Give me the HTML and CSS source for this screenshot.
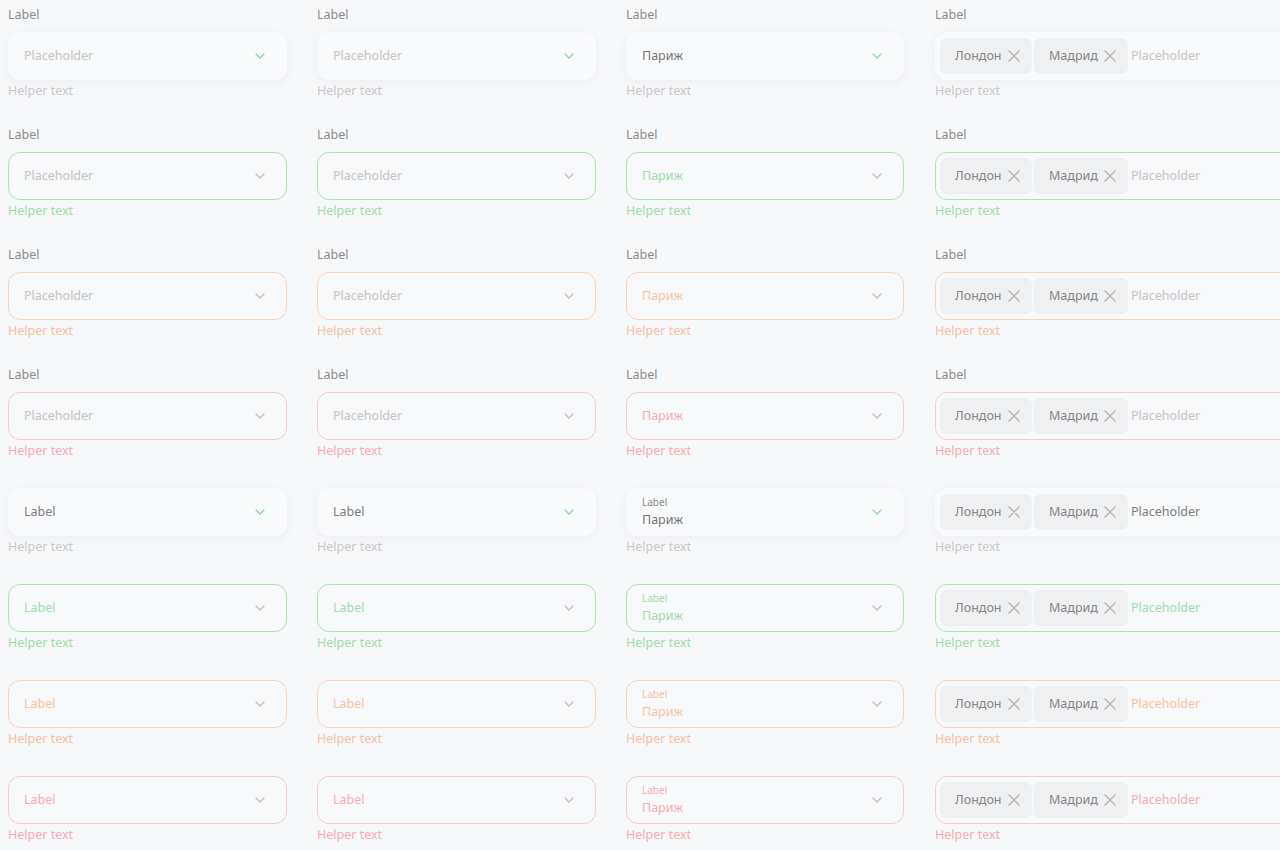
FILE: index.html
```html
<!DOCTYPE html>
<html lang="ru">
<head>
<meta charset="utf-8">
<title>Select fields</title>
<link rel="stylesheet" href="styles.css">
</head>
<body>
<main class="sheet">
  <section class="group group-labeled">
    <!-- Row 1: default -->
    <div class="field"><div class="label">Label</div><div class="box filled"><span class="ph">Placeholder</span><svg class="chev active" viewBox="0 0 10 6"><path d="M1 1l4 4 4-4"/></svg></div><div class="helper">Helper text</div></div>
    <div class="field"><div class="label">Label</div><div class="box filled"><span class="ph">Placeholder</span><svg class="chev active" viewBox="0 0 10 6"><path d="M1 1l4 4 4-4"/></svg></div><div class="helper">Helper text</div></div>
    <div class="field"><div class="label">Label</div><div class="box filled"><span class="val">Париж</span><svg class="chev active" viewBox="0 0 10 6"><path d="M1 1l4 4 4-4"/></svg></div><div class="helper">Helper text</div></div>
    <div class="field"><div class="label">Label</div><div class="box filled multi"><span class="chip">Лондон<svg class="x" viewBox="0 0 12 12"><path d="M1 1l10 10M11 1L1 11"/></svg></span><span class="chip">Мадрид<svg class="x" viewBox="0 0 12 12"><path d="M1 1l10 10M11 1L1 11"/></svg></span><span class="ph">Placeholder</span></div><div class="helper">Helper text</div></div>

    <!-- Row 2: success -->
    <div class="field success"><div class="label">Label</div><div class="box"><span class="ph">Placeholder</span><svg class="chev" viewBox="0 0 10 6"><path d="M1 1l4 4 4-4"/></svg></div><div class="helper">Helper text</div></div>
    <div class="field success"><div class="label">Label</div><div class="box"><span class="ph">Placeholder</span><svg class="chev" viewBox="0 0 10 6"><path d="M1 1l4 4 4-4"/></svg></div><div class="helper">Helper text</div></div>
    <div class="field success"><div class="label">Label</div><div class="box"><span class="val">Париж</span><svg class="chev" viewBox="0 0 10 6"><path d="M1 1l4 4 4-4"/></svg></div><div class="helper">Helper text</div></div>
    <div class="field success"><div class="label">Label</div><div class="box multi"><span class="chip">Лондон<svg class="x" viewBox="0 0 12 12"><path d="M1 1l10 10M11 1L1 11"/></svg></span><span class="chip">Мадрид<svg class="x" viewBox="0 0 12 12"><path d="M1 1l10 10M11 1L1 11"/></svg></span><span class="ph">Placeholder</span></div><div class="helper">Helper text</div></div>

    <!-- Row 3: warning -->
    <div class="field warning"><div class="label">Label</div><div class="box"><span class="ph">Placeholder</span><svg class="chev" viewBox="0 0 10 6"><path d="M1 1l4 4 4-4"/></svg></div><div class="helper">Helper text</div></div>
    <div class="field warning"><div class="label">Label</div><div class="box"><span class="ph">Placeholder</span><svg class="chev" viewBox="0 0 10 6"><path d="M1 1l4 4 4-4"/></svg></div><div class="helper">Helper text</div></div>
    <div class="field warning"><div class="label">Label</div><div class="box"><span class="val">Париж</span><svg class="chev" viewBox="0 0 10 6"><path d="M1 1l4 4 4-4"/></svg></div><div class="helper">Helper text</div></div>
    <div class="field warning"><div class="label">Label</div><div class="box multi"><span class="chip">Лондон<svg class="x" viewBox="0 0 12 12"><path d="M1 1l10 10M11 1L1 11"/></svg></span><span class="chip">Мадрид<svg class="x" viewBox="0 0 12 12"><path d="M1 1l10 10M11 1L1 11"/></svg></span><span class="ph">Placeholder</span></div><div class="helper">Helper text</div></div>

    <!-- Row 4: error -->
    <div class="field error"><div class="label">Label</div><div class="box"><span class="ph">Placeholder</span><svg class="chev" viewBox="0 0 10 6"><path d="M1 1l4 4 4-4"/></svg></div><div class="helper">Helper text</div></div>
    <div class="field error"><div class="label">Label</div><div class="box"><span class="ph">Placeholder</span><svg class="chev" viewBox="0 0 10 6"><path d="M1 1l4 4 4-4"/></svg></div><div class="helper">Helper text</div></div>
    <div class="field error"><div class="label">Label</div><div class="box"><span class="val">Париж</span><svg class="chev" viewBox="0 0 10 6"><path d="M1 1l4 4 4-4"/></svg></div><div class="helper">Helper text</div></div>
    <div class="field error"><div class="label">Label</div><div class="box multi"><span class="chip">Лондон<svg class="x" viewBox="0 0 12 12"><path d="M1 1l10 10M11 1L1 11"/></svg></span><span class="chip">Мадрид<svg class="x" viewBox="0 0 12 12"><path d="M1 1l10 10M11 1L1 11"/></svg></span><span class="ph">Placeholder</span></div><div class="helper">Helper text</div></div>
  </section>

  <section class="group group-floating">
    <!-- Row 5: default -->
    <div class="field"><div class="box filled"><span class="inlabel">Label</span><svg class="chev active" viewBox="0 0 10 6"><path d="M1 1l4 4 4-4"/></svg></div><div class="helper">Helper text</div></div>
    <div class="field"><div class="box filled"><span class="inlabel">Label</span><svg class="chev active" viewBox="0 0 10 6"><path d="M1 1l4 4 4-4"/></svg></div><div class="helper">Helper text</div></div>
    <div class="field"><div class="box filled"><span class="stack"><span class="mini">Label</span><span class="val">Париж</span></span><svg class="chev active" viewBox="0 0 10 6"><path d="M1 1l4 4 4-4"/></svg></div><div class="helper">Helper text</div></div>
    <div class="field"><div class="box filled multi"><span class="chip">Лондон<svg class="x" viewBox="0 0 12 12"><path d="M1 1l10 10M11 1L1 11"/></svg></span><span class="chip">Мадрид<svg class="x" viewBox="0 0 12 12"><path d="M1 1l10 10M11 1L1 11"/></svg></span><span class="inlabel">Placeholder</span></div><div class="helper">Helper text</div></div>

    <!-- Row 6: success -->
    <div class="field success"><div class="box"><span class="inlabel">Label</span><svg class="chev" viewBox="0 0 10 6"><path d="M1 1l4 4 4-4"/></svg></div><div class="helper">Helper text</div></div>
    <div class="field success"><div class="box"><span class="inlabel">Label</span><svg class="chev" viewBox="0 0 10 6"><path d="M1 1l4 4 4-4"/></svg></div><div class="helper">Helper text</div></div>
    <div class="field success"><div class="box"><span class="stack"><span class="mini">Label</span><span class="val">Париж</span></span><svg class="chev" viewBox="0 0 10 6"><path d="M1 1l4 4 4-4"/></svg></div><div class="helper">Helper text</div></div>
    <div class="field success"><div class="box multi"><span class="chip">Лондон<svg class="x" viewBox="0 0 12 12"><path d="M1 1l10 10M11 1L1 11"/></svg></span><span class="chip">Мадрид<svg class="x" viewBox="0 0 12 12"><path d="M1 1l10 10M11 1L1 11"/></svg></span><span class="inlabel">Placeholder</span></div><div class="helper">Helper text</div></div>

    <!-- Row 7: warning -->
    <div class="field warning"><div class="box"><span class="inlabel">Label</span><svg class="chev" viewBox="0 0 10 6"><path d="M1 1l4 4 4-4"/></svg></div><div class="helper">Helper text</div></div>
    <div class="field warning"><div class="box"><span class="inlabel">Label</span><svg class="chev" viewBox="0 0 10 6"><path d="M1 1l4 4 4-4"/></svg></div><div class="helper">Helper text</div></div>
    <div class="field warning"><div class="box"><span class="stack"><span class="mini">Label</span><span class="val">Париж</span></span><svg class="chev" viewBox="0 0 10 6"><path d="M1 1l4 4 4-4"/></svg></div><div class="helper">Helper text</div></div>
    <div class="field warning"><div class="box multi"><span class="chip">Лондон<svg class="x" viewBox="0 0 12 12"><path d="M1 1l10 10M11 1L1 11"/></svg></span><span class="chip">Мадрид<svg class="x" viewBox="0 0 12 12"><path d="M1 1l10 10M11 1L1 11"/></svg></span><span class="inlabel">Placeholder</span></div><div class="helper">Helper text</div></div>

    <!-- Row 8: error -->
    <div class="field error"><div class="box"><span class="inlabel">Label</span><svg class="chev" viewBox="0 0 10 6"><path d="M1 1l4 4 4-4"/></svg></div><div class="helper">Helper text</div></div>
    <div class="field error"><div class="box"><span class="inlabel">Label</span><svg class="chev" viewBox="0 0 10 6"><path d="M1 1l4 4 4-4"/></svg></div><div class="helper">Helper text</div></div>
    <div class="field error"><div class="box"><span class="stack"><span class="mini">Label</span><span class="val">Париж</span></span><svg class="chev" viewBox="0 0 10 6"><path d="M1 1l4 4 4-4"/></svg></div><div class="helper">Helper text</div></div>
    <div class="field error"><div class="box multi"><span class="chip">Лондон<svg class="x" viewBox="0 0 12 12"><path d="M1 1l10 10M11 1L1 11"/></svg></span><span class="chip">Мадрид<svg class="x" viewBox="0 0 12 12"><path d="M1 1l10 10M11 1L1 11"/></svg></span><span class="inlabel">Placeholder</span></div><div class="helper">Helper text</div></div>
  </section>
</main>
</body>
</html>
```

FILE: styles.css
```css
html, body {
  margin: 0;
  padding: 0;
  background: #f7f8fa;
  overflow: hidden;
}

body {
  font-family: "Noto Sans", "Open Sans", sans-serif;
  font-size: 12.5px;
  color: #8a8a8a;
}

.sheet {
  padding: 6px 0 0 8px;
  width: 1400px;
}

.group {
  display: grid;
  grid-template-columns: 279px 279px 278px 420px;
  column-gap: 30px;
}

.group > .field:nth-child(4n) {
  margin-left: 1px;
}

.group-labeled {
  row-gap: 28px;
}

.group-floating {
  row-gap: 30px;
  margin-top: 30px;
}

.field {
  display: flex;
  flex-direction: column;
  --state: #c8c8c8;
  --border: transparent;
}

.label {
  height: 16px;
  line-height: 18px;
  margin-bottom: 10px;
  color: #8c8c8c;
}

.box {
  box-sizing: border-box;
  height: 48px;
  display: flex;
  align-items: center;
  padding: 0 21px 2px 15px;
  border: 1px solid var(--border);
  border-radius: 12px;
  background: #f8f9fb;
}

.box.filled {
  background: #f9fafb;
  box-shadow: 0 2px 10px rgba(30, 40, 60, 0.05);
}

.box.multi {
  padding: 0 12px 0 4px;
  gap: 2px;
}

.multi .ph,
.multi .inlabel {
  margin-bottom: 2px;
}

.helper {
  margin-top: 2px;
  height: 16px;
  line-height: 18px;
  color: var(--state);
}

.ph {
  flex: 1;
  color: #c4c4c4;
}

.val {
  flex: 1;
  color: #737373;
}

.inlabel {
  flex: 1;
  color: #7c7c7c;
}

.chip + .chip + .ph,
.chip + .chip + .inlabel {
  margin-left: 1px;
}

.stack {
  flex: 1;
  align-self: stretch;
  display: flex;
  flex-direction: column;
  padding-top: 7px;
}

.mini {
  font-size: 10px;
  line-height: 12px;
  color: #8a8a8a;
}

.stack .val {
  flex: none;
  margin-top: 3px;
  line-height: 18px;
}

.chev {
  width: 10px;
  height: 6px;
  flex: none;
  margin-bottom: -2px;
  fill: none;
  stroke: #bdbdbd;
  stroke-width: 1.2;
  stroke-linecap: round;
  stroke-linejoin: round;
}

.chev.active {
  stroke: #8fd39a;
}

.chip {
  box-sizing: border-box;
  flex: none;
  height: 36px;
  width: 92px;
  display: flex;
  align-items: center;
  justify-content: space-between;
  padding: 0 12px 2px 15px;
  border-radius: 7px;
  background: #eff0f2;
  color: #858585;
}

.chip + .chip {
  width: 94px;
}

.x {
  width: 12px;
  height: 12px;
  margin-top: 2px;
  fill: none;
  stroke: #b4b4b4;
  stroke-width: 1.3;
  stroke-linecap: round;
}

/* states */
.success {
  --state: #9fdcaa;
  --border: #a4e8ab;
}
.warning {
  --state: #f8c19f;
  --border: #fbd2b8;
}
.error {
  --state: #f9aab1;
  --border: #fbc8cc;
}

.success .val,
.warning .val,
.error .val,
.success .mini,
.warning .mini,
.error .mini,
.success .inlabel,
.warning .inlabel,
.error .inlabel {
  color: var(--state);
}
```
